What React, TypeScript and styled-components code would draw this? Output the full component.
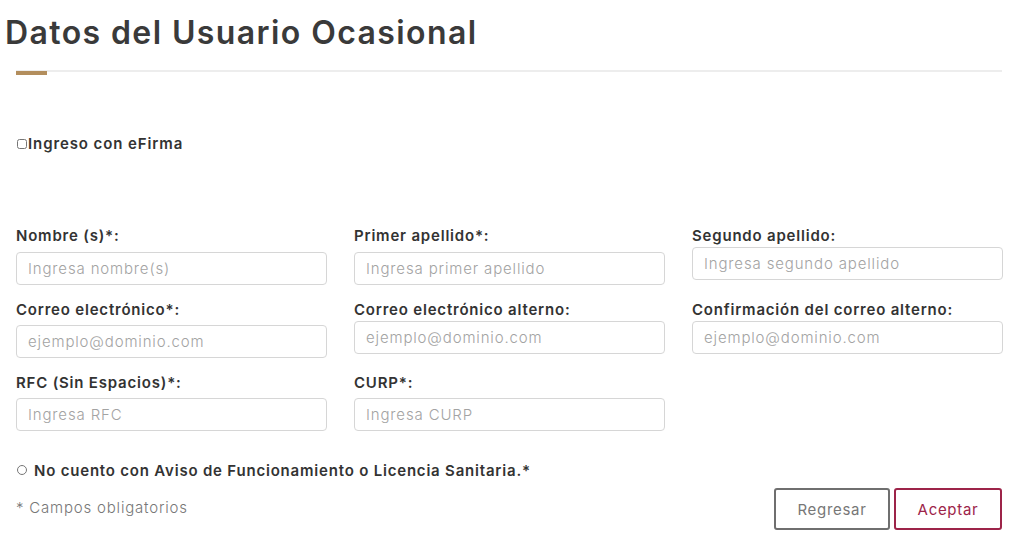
import React from "react";
import styled, { createGlobalStyle } from "styled-components";

const GlobalStyle = createGlobalStyle`
  html, body {
    margin: 0;
    padding: 0;
    background: #ffffff;
  }
  body {
    font-family: Inter, "Open Sans", "Liberation Sans", sans-serif;
    color: #333333;
    letter-spacing: 0.8px;
  }
  * {
    box-sizing: border-box;
  }
`;

const Page = styled.div`
  width: 1024px;
  height: 549px;
  padding: 14px 22px 0 16px;
  overflow: hidden;
`;

const Title = styled.h1`
  margin: 0 0 0 -11px;
  font-size: 32px;
  line-height: 38px;
  font-weight: 600;
  color: #3a3a3a;
  letter-spacing: 1.4px;
`;

const Rule = styled.div`
  position: relative;
  margin-top: 18px;
  height: 2px;
  background: #ededed;
  &::after {
    content: "";
    position: absolute;
    left: 0;
    top: 1px;
    width: 31px;
    height: 4px;
    background: #b38e5d;
  }
`;

const CheckRow = styled.label`
  display: flex;
  align-items: center;
  margin-top: 62px;
  font-size: 15px;
  font-weight: 600;
  line-height: 20px;
  letter-spacing: 0.9px;
  color: #333333;
`;

const Check = styled.input`
  width: 10px;
  height: 10px;
  margin: 0 1px 0 1px;
`;

const Form = styled.div`
  display: flex;
  flex-direction: column;
  gap: 15px;
  margin-top: 72px;
`;

const Row = styled.div`
  display: grid;
  grid-template-columns: repeat(3, 311px);
  column-gap: 27px;
  align-items: start;
`;

const Field = styled.div<{ $gap: number }>`
  display: flex;
  flex-direction: column;
  gap: ${p => p.$gap}px;
`;

const Label = styled.label`
  font-size: 15px;
  font-weight: 600;
  line-height: 20px;
  color: #333333;
`;

const Input = styled.input`
  height: 33px;
  width: 100%;
  border: 1px solid #d6d6d6;
  border-radius: 4px;
  padding: 0 11px;
  font-family: inherit;
  font-size: 15px;
  font-weight: 300;
  letter-spacing: 0.85px;
  color: #333333;
  outline: none;
  &::placeholder {
    color: #a3a3a3;
  }
`;

const RadioRow = styled.label`
  display: flex;
  align-items: center;
  margin-top: 30px;
  font-size: 15px;
  font-weight: 600;
  line-height: 20px;
  color: #333333;
`;

const Radio = styled.input`
  width: 10px;
  height: 10px;
  margin: -3px 7px 0 1px;
`;

const Footer = styled.div`
  display: flex;
  align-items: center;
  justify-content: space-between;
  margin-top: 7px;
`;

const Note = styled.span`
  font-size: 15px;
  font-weight: 300;
  line-height: 20px;
  margin-top: -3px;
  color: #777777;
`;

const Buttons = styled.div`
  display: flex;
  gap: 4px;
`;

const Button = styled.button<{ $primary?: boolean; $w: number }>`
  width: ${p => p.$w}px;
  height: 42px;
  background: #ffffff;
  border: 2px solid ${p => (p.$primary ? "#9d2449" : "#6f6f6f")};
  border-radius: 3px;
  font-family: inherit;
  font-size: 15px;
  font-weight: 400;
  letter-spacing: 0.7px;
  color: ${p => (p.$primary ? "#9d2449" : "#777777")};
  cursor: pointer;
`;

const rows = [
  [
    { label: "Nombre (s)*:", ph: "Ingresa nombre(s)", gap: 6 },
    { label: "Primer apellido*:", ph: "Ingresa primer apellido", gap: 6 },
    { label: "Segundo apellido:", ph: "Ingresa segundo apellido", gap: 1 },
  ],
  [
    { label: "Correo electrónico*:", ph: "ejemplo@dominio.com", gap: 5 },
    { label: "Correo electrónico alterno:", ph: "ejemplo@dominio.com", gap: 1 },
    { label: "Confirmación del correo alterno:", ph: "ejemplo@dominio.com", gap: 1 },
  ],
  [
    { label: "RFC (Sin Espacios)*:", ph: "Ingresa RFC", gap: 5 },
    { label: "CURP*:", ph: "Ingresa CURP", gap: 5 },
  ],
];

const App: React.FC = () => {
  return (
    <>
      <GlobalStyle />
      <Page>
        <Title>Datos del Usuario Ocasional</Title>
        <Rule />
        <CheckRow>
          <Check type="checkbox" />
          Ingreso con eFirma
        </CheckRow>
        <Form>
          {rows.map((row, i) => (
            <Row key={i}>
              {row.map(f => (
                <Field key={f.label} $gap={f.gap}>
                  <Label>{f.label}</Label>
                  <Input placeholder={f.ph} />
                </Field>
              ))}
            </Row>
          ))}
        </Form>
        <RadioRow>
          <Radio type="radio" />
          No cuento con Aviso de Funcionamiento o Licencia Sanitaria.*
        </RadioRow>
        <Footer>
          <Note>* Campos obligatorios</Note>
          <Buttons>
            <Button $w={116}>Regresar</Button>
            <Button $w={108} $primary>
              Aceptar
            </Button>
          </Buttons>
        </Footer>
      </Page>
    </>
  );
};

export default App;
